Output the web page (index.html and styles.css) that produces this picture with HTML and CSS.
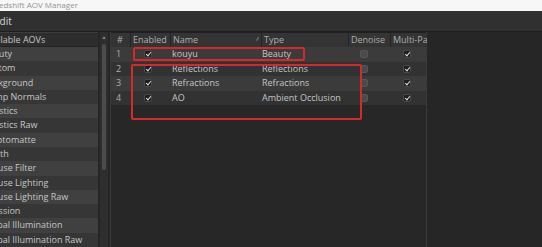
FILE: index.html
```html
<!DOCTYPE html>
<html lang="en">
<head>
  <meta charset="UTF-8">
  <title>Redshift AOV Manager</title>
  <link rel="stylesheet" href="styles.css">
</head>
<body>
  <div class="window">
    <div class="titlebar">Redshift AOV Manager</div>
    <div class="menubar"><span class="menu-item">Edit</span></div>

    <div class="main">
      <div class="aov-panel">
        <div class="list-header">Available AOVs</div>
        <div class="list-row">Beauty</div>
        <div class="list-row">Custom</div>
        <div class="list-row">Background</div>
        <div class="list-row">Bump Normals</div>
        <div class="list-row">Caustics</div>
        <div class="list-row">Caustics Raw</div>
        <div class="list-row">Cryptomatte</div>
        <div class="list-row">Depth</div>
        <div class="list-row">Diffuse Filter</div>
        <div class="list-row">Diffuse Lighting</div>
        <div class="list-row">Diffuse Lighting Raw</div>
        <div class="list-row">Emission</div>
        <div class="list-row">Global Illumination</div>
        <div class="list-row">Global Illumination Raw</div>
      </div>

      <div class="scrollbar">
        <div class="scroll-arrow">&#9650;</div>
        <div class="scroll-thumb"></div>
      </div>

      <div class="aov-table">
        <div class="table-head">
          <div class="th">#</div>
          <div class="th">Enabled</div>
          <div class="th th-sort">Name</div>
          <div class="th">Type</div>
          <div class="th">Denoise</div>
          <div class="th">Multi-Pass</div>
        </div>

        <div class="tr">
          <div class="td">1</div>
          <div class="td td-center"><span class="check on"></span></div>
          <div class="td">kouyu</div>
          <div class="td">Beauty</div>
          <div class="td td-center"><span class="check off"></span></div>
          <div class="td td-center"><span class="check on"></span></div>
        </div>
        <div class="tr">
          <div class="td">2</div>
          <div class="td td-center"><span class="check on"></span></div>
          <div class="td">Reflections</div>
          <div class="td">Reflections</div>
          <div class="td td-center"><span class="check off"></span></div>
          <div class="td td-center"><span class="check on"></span></div>
        </div>
        <div class="tr">
          <div class="td">3</div>
          <div class="td td-center"><span class="check on"></span></div>
          <div class="td">Refractions</div>
          <div class="td">Refractions</div>
          <div class="td td-center"><span class="check off"></span></div>
          <div class="td td-center"><span class="check on"></span></div>
        </div>
        <div class="tr">
          <div class="td">4</div>
          <div class="td td-center"><span class="check on"></span></div>
          <div class="td">AO</div>
          <div class="td">Ambient Occlusion</div>
          <div class="td td-center"><span class="check off"></span></div>
          <div class="td td-center"><span class="check on"></span></div>
        </div>
      </div>

      <div class="side-area"></div>
    </div>
  </div>

  <!-- annotation boxes drawn over the screenshot -->
  <div class="mark mark-first"></div>
  <div class="mark mark-rest"></div>
</body>
</html>
```

FILE: styles.css
```css
:root {
  --bg: #262626;
  --row-light: #3b3b3b;
  --row-dark: #323232;
  --text: #c6c6c6;
  --text-dim: #aeaeae;
  --mark: #d42a2a;
}

* {
  box-sizing: border-box;
  margin: 0;
  padding: 0;
}

body {
  position: relative;
  width: 542px;
  height: 247px;
  overflow: hidden;
  background-color: var(--bg);
  font-family: 'Open Sans', 'Noto Sans', sans-serif;
  font-size: 9px;
  color: var(--text);
}

.window {
  margin-left: -18px;
  width: 560px;
}

.titlebar {
  height: 11px;
  line-height: 10px;
  padding-left: 12px;
  background-color: #f7f7f7;
  color: #949494;
  font-size: 8px;
}

.menubar {
  height: 20px;
  line-height: 20px;
  padding-left: 12px;
  background-color: #303030;
  color: #d8d8d8;
  font-size: 10px;
}

.main {
  display: flex;
  height: 216px;
  border-top: 1px solid #1d1d1d;
  background-color: var(--bg);
}

.aov-panel {
  width: 116px;
  display: flex;
  flex-direction: column;
}

.list-header {
  height: 15px;
  line-height: 14px;
  padding-left: 1px;
  background-color: #2d2d2d;
  border-top: 1px solid #3d3d3d;
  border-bottom: 1px solid #232323;
}

.list-row {
  height: 14.5px;
  line-height: 14.5px;
  padding-left: 1px;
  white-space: nowrap;
  overflow: hidden;
}

.list-row:nth-child(even) {
  background-color: #404040;
}

.list-row:nth-child(odd) {
  background-color: #363636;
}

.scrollbar {
  width: 8px;
  margin-left: 2px;
  background-color: #2e2e2e;
  display: flex;
  flex-direction: column;
  align-items: center;
}

.scroll-arrow {
  font-size: 5px;
  line-height: 10px;
  color: #8a8a8a;
}

.scroll-thumb {
  width: 4px;
  height: 126px;
  margin-top: 2px;
  background-color: #4c4c4c;
  border-radius: 2px;
}

.aov-table {
  width: 317px;
  margin-left: 2px;
  border-left: 1px solid #3a3a3a;
  border-right: 1px solid #3a3a3a;
  background-color: #272727;
}

.table-head,
.tr {
  display: grid;
  grid-template-columns: 19px 39px 90px 86px 41px 41px;
}

.table-head {
  height: 15px;
  gap: 1px;
  background-color: #242424;
  border-top: 1px solid #202020;
}

.th {
  line-height: 14px;
  padding-left: 2px;
  background-color: #343434;
  color: var(--text-dim);
  white-space: nowrap;
  overflow: hidden;
}

.th:first-child {
  padding-left: 6px;
}

.th-sort {
  position: relative;
}

.th-sort::after {
  content: '';
  position: absolute;
  right: 3px;
  top: 4px;
  width: 1px;
  height: 4px;
  background-color: #777;
  transform: rotate(35deg);
}

.tr {
  height: 14.5px;
  line-height: 14.5px;
}

.tr:nth-child(even) {
  background-color: var(--row-light);
}

.tr:nth-child(odd) {
  background-color: var(--row-dark);
}

.td {
  padding-left: 3px;
  white-space: nowrap;
  overflow: hidden;
}

.td:first-child {
  padding-left: 5px;
  color: var(--text-dim);
}

.td-center {
  display: flex;
  align-items: center;
  justify-content: center;
  padding-left: 0;
}

.td-center:nth-child(2) {
  padding-right: 3px;
}

.td-center:nth-child(5) {
  padding-right: 4px;
}

.check {
  position: relative;
  width: 8px;
  height: 8px;
  border-radius: 2px;
}

.check.on {
  background-color: #1e1e1e;
  border: 1px solid #4a4a4a;
}

.check.on::after {
  content: '';
  position: absolute;
  left: 2px;
  top: 0px;
  width: 2px;
  height: 4px;
  border-right: 1.5px solid #dcdcdc;
  border-bottom: 1.5px solid #dcdcdc;
  transform: rotate(40deg);
}

.check.off {
  background-color: #4a4a4a;
  border: 1px solid #565656;
}

.side-area {
  flex: 1;
  background-color: #262626;
}

.mark {
  position: absolute;
  border: 2px solid var(--mark);
  border-radius: 2px;
}

.mark-first {
  left: 133px;
  top: 47px;
  width: 172px;
  height: 14px;
}

.mark-rest {
  left: 131px;
  top: 64px;
  width: 231px;
  height: 56px;
}
```
